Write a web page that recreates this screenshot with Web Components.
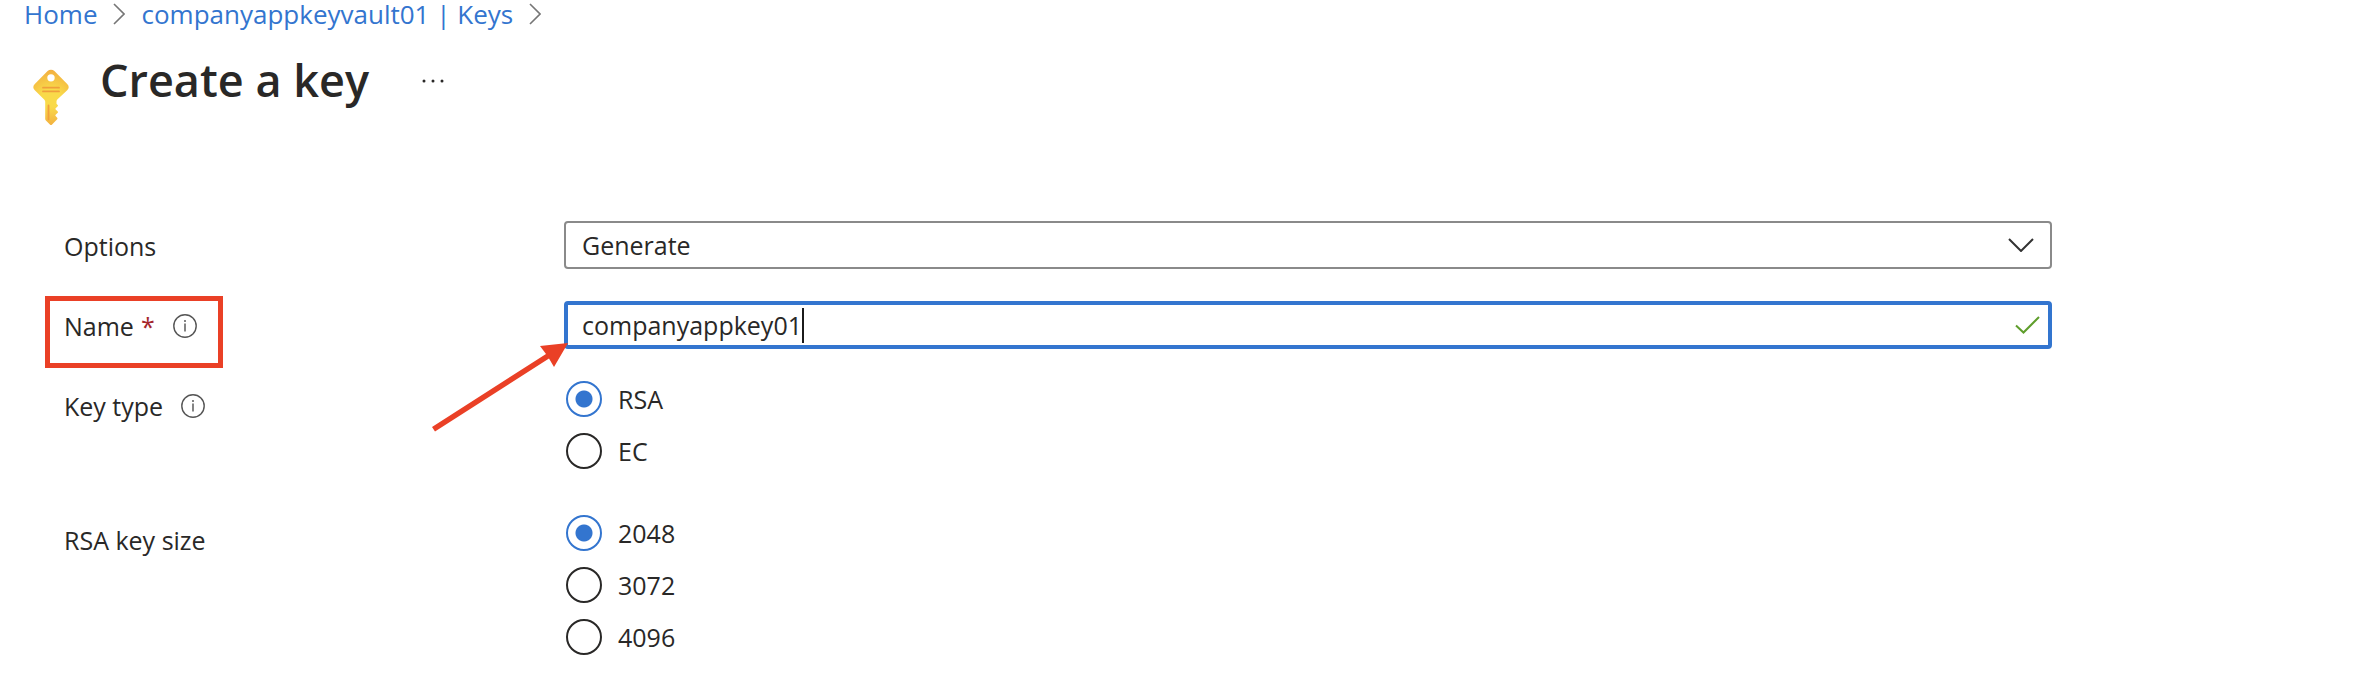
<!DOCTYPE html>
<html lang="en">
<head>
<meta charset="utf-8">
<title>Create a key</title>
<style>
  :root {
    --text: #292827;
    --accent: #3375cf;
    --border: #8a8a8a;
    --mark: #ea4026;
    --required: #a4262c;
    --valid: #5f9e2c;
  }
  body {
    margin: 0;
    background: #ffffff;
    color: var(--text);
    font-family: "Open Sans", "Noto Sans", sans-serif;
    font-size: 25px;
    line-height: 36px;
  }
</style>
</head>
<body>

<kv-page>
  <kv-breadcrumb slot="nav">
    <kv-crumb href="#home">Home</kv-crumb>
    <kv-crumb href="#keys">companyappkeyvault01 | Keys</kv-crumb>
  </kv-breadcrumb>
  <kv-title slot="title">Create a key</kv-title>

  <kv-dropdown label="Options" value="Generate"></kv-dropdown>
  <kv-text-field label="Name" value="companyappkey01" required info marked></kv-text-field>
  <kv-radio-group label="Key type" options="RSA,EC" info></kv-radio-group>
  <kv-radio-group label="RSA key size" options="2048,3072,4096"></kv-radio-group>
</kv-page>

<script>
(function () {
  'use strict';

  /* ── Page shell ── */
  class KvPage extends HTMLElement {
    connectedCallback() {
      this.attachShadow({ mode: 'open' }).innerHTML = `
        <style>
          :host { display: block; }
          header { padding: 0 32px 0 24px; }
          form {
            display: flex;
            flex-direction: column;
            gap: 30px;
            padding: 95px 308px 32px 64px;
          }
        </style>
        <header>
          <slot name="nav"></slot>
          <slot name="title"></slot>
        </header>
        <form><slot></slot></form>
      `;
    }
  }

  /* ── Breadcrumb ── */
  class KvBreadcrumb extends HTMLElement {
    connectedCallback() {
      this.attachShadow({ mode: 'open' }).innerHTML = `
        <style>
          :host { display: block; }
          nav { display: flex; height: 28px; align-items: center; gap: 16px; font-size: 26px; }
        </style>
        <nav aria-label="Breadcrumb"><slot></slot></nav>
      `;
    }
  }

  class KvCrumb extends HTMLElement {
    connectedCallback() {
      this.attachShadow({ mode: 'open' }).innerHTML = `
        <style>
          :host { display: flex; align-items: center; gap: 16px; font-size: 26px; line-height: 28px; white-space: nowrap; }
          a { color: var(--accent); text-decoration: none; }
          svg { display: block; }
        </style>
        <a href="${this.getAttribute('href')}"><slot></slot></a>
        <svg width="12" height="22" viewBox="0 0 12 22" fill="none" stroke="#767676" stroke-width="1.6" aria-hidden="true">
          <path d="M1 1l10 10L1 21"/>
        </svg>
      `;
    }
  }

  /* ── Title with key icon and "more" button ── */
  class KvTitle extends HTMLElement {
    connectedCallback() {
      this.attachShadow({ mode: 'open' }).innerHTML = `
        <style>
          :host { display: flex; align-items: flex-start; padding: 20px 0 0 8px; }
          .icon { display: block; margin: 20px 30px 0 0; }
          h1 { margin: 0; font-size: 45px; font-weight: 600; line-height: 64px; white-space: nowrap; }
          button {
            margin: 22px 0 0 44px;
            padding: 8px;
            border: 0;
            background: none;
            color: inherit;
          }
          button svg { display: block; }
        </style>
        <svg class="icon" width="38" height="58" viewBox="0 0 38 62" preserveAspectRatio="none" aria-hidden="true">
          <defs>
            <radialGradient id="g" gradientUnits="userSpaceOnUse" cx="19" cy="32" r="32">
              <stop offset="0.3" stop-color="#f9da4a"/>
              <stop offset="1" stop-color="#f2ab3f"/>
            </radialGradient>
          </defs>
          <path fill="url(#g)" fill-rule="evenodd" d="M35.2 17.2L22.4 3.3a4.8 4.8 0 0 0-6.8 0L2.8 17.2a4.9 4.9 0 0 0 0 6.6L12.4 34q.8.9.8 2.2v18.2q0 1 .7 1.7l4 4.2q1.1 1.1 2.2 0l5.1-5.4q.6-.8 0-1.600l-1.600-2q-.5-.7.1-1.300l2-2.100q.6-.7 0-1.400l-2-2.100q-.6-.7 0-1.400l2-2.100q.6-.7 0-1.400l-1.200-1.300v-2.400q0-1.300.8-2.200l9.900-9.800a4.900 4.900 0 0 0 0-6.600zM19 6.600a3.700 3.900 0 1 1 0 7.800a3.700 3.900 0 0 1 0-7.800z"/>
          <path fill="none" stroke="#f09f3c" stroke-width="1.8" stroke-linecap="round" d="M11 21h16M11 25h16M16.500 40v15"/>
        </svg>
        <h1><slot></slot></h1>
        <button type="button" aria-label="More">
          <svg width="24" height="6" viewBox="0 0 24 6" fill="currentColor">
            <circle cx="3" cy="3" r="1.5"/><circle cx="12" cy="3" r="1.5"/><circle cx="21" cy="3" r="1.5"/>
          </svg>
        </button>
      `;
    }
  }

  /* ── Info icon ── */
  class KvInfo extends HTMLElement {
    connectedCallback() {
      this.attachShadow({ mode: 'open' }).innerHTML = `
        <style>
          :host { display: block; }
          svg { display: block; }
        </style>
        <svg width="24" height="24" viewBox="0 0 24 24" fill="none" stroke="#555" stroke-width="1.4" role="img" aria-label="Info">
          <circle cx="12" cy="12" r="11.2"/>
          <path stroke="#777" stroke-width="1.8" d="M12 9.500v8M12 6v2"/>
        </svg>
      `;
    }
  }

  /* ── Base row: label on the left, control on the right ── */
  class KvField extends HTMLElement {
    connectedCallback() {
      const label = this.getAttribute('label');
      const tag = this.labelTag();
      this.attachShadow({ mode: 'open' }).innerHTML = `
        <style>
          :host { display: grid; grid-template-columns: 500px minmax(0, 1fr); align-items: start; }
          .caption { position: relative; display: flex; align-items: center; justify-self: start; line-height: 50px; white-space: nowrap; }
          .caption kv-info { margin-left: 18px; }
          .required { margin-left: 7px; color: var(--required); }
          .control { position: relative; }
          .box { display: flex; align-items: center; box-sizing: border-box; height: 48px; border-radius: 4px; }
          select, input { font: inherit; color: inherit; background: none; border: 0; margin: 0; outline: 0; }
          ${this.styles()}
        </style>
        <div class="caption">
          ${tag === 'label' ? `<label for="control">${label}</label>` : `<span id="caption">${label}</span>`}
          ${this.hasAttribute('required') ? '<span class="required" aria-hidden="true">*</span>' : ''}
          ${this.hasAttribute('info') ? '<kv-info></kv-info>' : ''}
          ${this.hasAttribute('marked') ? '<div class="frame"></div>' : ''}
        </div>
        <div class="control">${this.control()}</div>
      `;
    }
    labelTag() { return 'label'; }
    styles() { return ''; }
    control() { return ''; }
  }

  class KvDropdown extends KvField {
    styles() {
      return `
        .box { display: grid; border: 2px solid var(--border); }
        select { grid-area: 1 / 1; appearance: none; width: 100%; height: 44px; padding: 0 56px 0 16px; }
        svg { grid-area: 1 / 1; justify-self: end; margin-right: 16px; pointer-events: none; }
      `;
    }
    control() {
      return `
        <div class="box">
          <select id="control"><option>${this.getAttribute('value')}</option></select>
          <svg width="26" height="14" viewBox="0 0 26 14" fill="none" stroke="#333" stroke-width="2" aria-hidden="true">
            <path d="M1 1l12 12L25 1"/>
          </svg>
        </div>
      `;
    }
  }

  class KvTextField extends KvField {
    styles() {
      return `
        .box { border: 4px solid var(--accent); padding: 0 8px 0 14px; }
        input { field-sizing: content; padding: 0; height: 36px; }
        .caret { width: 2px; height: 35px; background: #1b1b1b; }
        .check { margin-left: auto; stroke: var(--valid); }
        /* callouts over the form */
        .frame { position: absolute; inset: -5px -26px -17px -19px; border: 5px solid var(--mark); pointer-events: none; }
        .arrow { position: absolute; left: -133px; top: 40px; fill: var(--mark); pointer-events: none; }
      `;
    }
    control() {
      return `
        <div class="box">
          <input id="control" type="text" value="${this.getAttribute('value')}" required>
          <span class="caret"></span>
          <svg class="check" width="26" height="18" viewBox="0 0 26 18" fill="none" stroke-width="2" aria-hidden="true">
            <path d="M2 9.500l7.500 7L25 1"/>
          </svg>
        </div>
        <svg class="arrow" width="138" height="92" viewBox="0 0 138 92" aria-hidden="true">
          <path d="M137 2L109 5l6 8L1 86l3 4.500L118 17.500l5 8.500z"/>
        </svg>
      `;
    }
  }

  class KvRadioGroup extends KvField {
    labelTag() { return 'span'; }
    styles() {
      return `
        .item { display: flex; align-items: center; gap: 16px; margin: 0 0 16px 2px; }
        input {
          appearance: none;
          box-sizing: border-box;
          width: 36px;
          height: 36px;
          border: 2px solid var(--text);
          border-radius: 50%;
        }
        input:checked {
          border-color: var(--accent);
          background: radial-gradient(circle, var(--accent) 8px, transparent 9px);
        }
      `;
    }
    control() {
      const items = this.getAttribute('options').split(',').map((name, i) => `
        <div class="item">
          <input type="radio" name="choice" id="o${i}" value="${name}" ${i === 0 ? 'checked' : ''}>
          <label for="o${i}">${name}</label>
        </div>`).join('');
      return `<div role="radiogroup" aria-labelledby="caption">${items}</div>`;
    }
  }

  customElements.define('kv-page', KvPage);
  customElements.define('kv-breadcrumb', KvBreadcrumb);
  customElements.define('kv-crumb', KvCrumb);
  customElements.define('kv-title', KvTitle);
  customElements.define('kv-info', KvInfo);
  customElements.define('kv-dropdown', KvDropdown);
  customElements.define('kv-text-field', KvTextField);
  customElements.define('kv-radio-group', KvRadioGroup);
})();
</script>
</body>
</html>
